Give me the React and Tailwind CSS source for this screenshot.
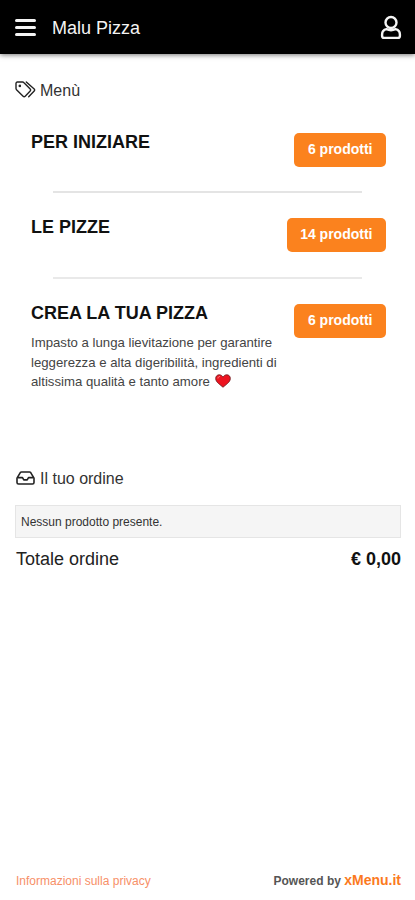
import React from 'react';

const categories = [
  { id: 1, name: 'PER INIZIARE', count: 6 },
  { id: 2, name: 'LE PIZZE', count: 14 },
  {
    id: 3,
    name: 'CREA LA TUA PIZZA',
    count: 6,
    description:
      'Impasto a lunga lievitazione per garantire leggerezza e alta digeribilità, ingredienti di altissima qualità e tanto amore',
  },
];

function UserIcon() {
  return (
    <svg width="22" height="26" viewBox="0 0 22 26" fill="none" stroke="#f4f4f4" strokeWidth="2.400" strokeLinejoin="round">
      <circle cx="11" cy="7.500" r="5.500" />
      <path d="M6.500 14.200C3.700 14.800 2.100 17 2.100 19.500v1.500c0 1.100.7 1.900 1.900 1.900h14c1.200 0 1.900-.8 1.900-1.900v-1.500c0-2.500-1.600-4.700-4.400-5.300-2.800 1.300-6.200 1.300-9 0z" />
    </svg>
  );
}

function TagsIcon() {
  return (
    <svg width="21" height="18" viewBox="0 0 21 18" fill="none" stroke="#222" strokeWidth="1.4" strokeLinejoin="round" strokeLinecap="round">
      <path d="M1 2.300v5.300c0 .4.200.8.500 1.100l6.600 6.500c.6.600 1.500.6 2.100 0l5-5.100c.6-.6.600-1.500 0-2.100L8.700 1.500A1.500 1.500 0 0 0 7.600 1H2.300C1.600 1 1 1.600 1 2.300z" />
      <path d="M11.300 1l7.900 7c.6.600.6 1.500 0 2.100l-5.500 5.600" />
      <circle cx="4.800" cy="4.900" r=".6" fill="#222" />
    </svg>
  );
}

function InboxIcon() {
  return (
    <svg width="19" height="14" viewBox="0 0 19 14" fill="none" stroke="#222" strokeWidth="1.6" strokeLinejoin="round">
      <path d="M1 7.200 4.300 1.600C4.600 1.200 5 1 5.500 1h8c.5 0 .9.200 1.200.6L18 7.200v4.300c0 .8-.7 1.500-1.500 1.500h-14C1.700 13 1 12.300 1 11.500z" />
      <path d="M1.800 6.600h4.700l1.300 2.300h3.400l1.300-2.300h4.700" />
    </svg>
  );
}

function HeartIcon() {
  return (
    <svg className="ml-px inline-block align-[-2px]" width="16" height="14" viewBox="0 0 16 14">
      <path
        d="M8 13.300C5.800 10.900.7 8.500.7 4.500.7 2.300 2.200.8 4.200.8 6 .8 7.300 1.800 8 3.200 8.700 1.800 10 .8 11.800.8c2 0 3.500 1.500 3.500 3.700 0 4-5.100 6.400-7.300 8.800z"
        fill="#ed1420"
        stroke="#752024"
        strokeWidth=".9"
      />
      <path d="M3 4c.1-1 .8-1.500 1.700-1.500" fill="none" stroke="#ff8a8a" strokeLinecap="round" />
    </svg>
  );
}

function Category({ category }) {
  return (
    <div className="flex items-start justify-between">
      <div className="w-[256px]">
        <h2 className="text-[18px] leading-5 font-bold text-[#111] whitespace-nowrap">{category.name}</h2>
        {category.description && (
          <p className="mt-[10px] text-[13.2px] leading-[19.5px] text-[#444]">
            {category.description} <HeartIcon />
          </p>
        )}
      </div>
      <button className="mt-px h-[34px] shrink-0 rounded-[5px] bg-[#fb821e] px-[13.5px] pb-px text-[14px] font-bold text-white">
        {category.count} prodotti
      </button>
    </div>
  );
}

function App() {
  return (
    <div className="flex h-[900px] flex-col bg-white font-['Liberation_Sans',Arial,sans-serif] text-[#333]">
      <header className="flex h-[54px] shrink-0 items-center bg-black px-[15px] pt-px shadow-[0_1px_5px_rgba(0,0,0,0.55)]">
        <button className="flex w-[21px] flex-col gap-1" aria-label="Menu">
          <span className="h-[3px] w-full rounded-full bg-[#f4f4f4]" />
          <span className="h-[3px] w-full rounded-full bg-[#f4f4f4]" />
          <span className="h-[3px] w-full rounded-full bg-[#f4f4f4]" />
        </button>
        <h1 className="ml-4 grow pt-px text-[18px] text-[#f4f4f4]">Malu Pizza</h1>
        <button className="-mr-[2px]" aria-label="Account">
          <UserIcon />
        </button>
      </header>

      <main className="pr-[14px] pl-4">
        <div className="-ml-px mt-[26px] flex h-5 items-center gap-1 text-[16px]">
          <TagsIcon />
          <span className="pt-[2px]">Menù</span>
        </div>

        <div className="mt-8 px-[15px]">
          <Category category={categories[0]} />
          <hr className="mr-[24px] ml-[22px] mt-6 mb-6 h-[2px] border-0 bg-[#e4e4e4]" />
          <Category category={categories[1]} />
          <hr className="mr-[24px] ml-[22px] mt-[25px] mb-[24px] h-[2px] border-0 bg-[#e9e9e9]" />
          <Category category={categories[2]} />
        </div>

        <div className="mt-[76px] flex h-5 items-center gap-[5px] text-[16px]">
          <InboxIcon />
          <span className="pt-[2px]">Il tuo ordine</span>
        </div>
        <div className="-ml-px mt-[17px] flex h-[33px] items-center border border-[#e5e5e5] bg-[#f5f5f5] px-[5px] pt-px text-[12px]">
          Nessun prodotto presente.
        </div>
        <div className="mt-[9px] flex items-center justify-between text-[18px] leading-6 text-[#222]">
          <span>Totale ordine</span>
          <span className="font-bold text-[#111]">€ 0,00</span>
        </div>
      </main>

      <footer className="mt-auto mb-[9px] flex items-baseline justify-between pr-[14px] pl-4 text-[12px]">
        <a className="pt-px text-[#f79068]">Informazioni sulla privacy</a>
        <span className="font-bold text-[#555]">
          Powered by <span className="text-[14px] text-[#fb7a1e]">xMenu.it</span>
        </span>
      </footer>
    </div>
  );
}

export default App;
